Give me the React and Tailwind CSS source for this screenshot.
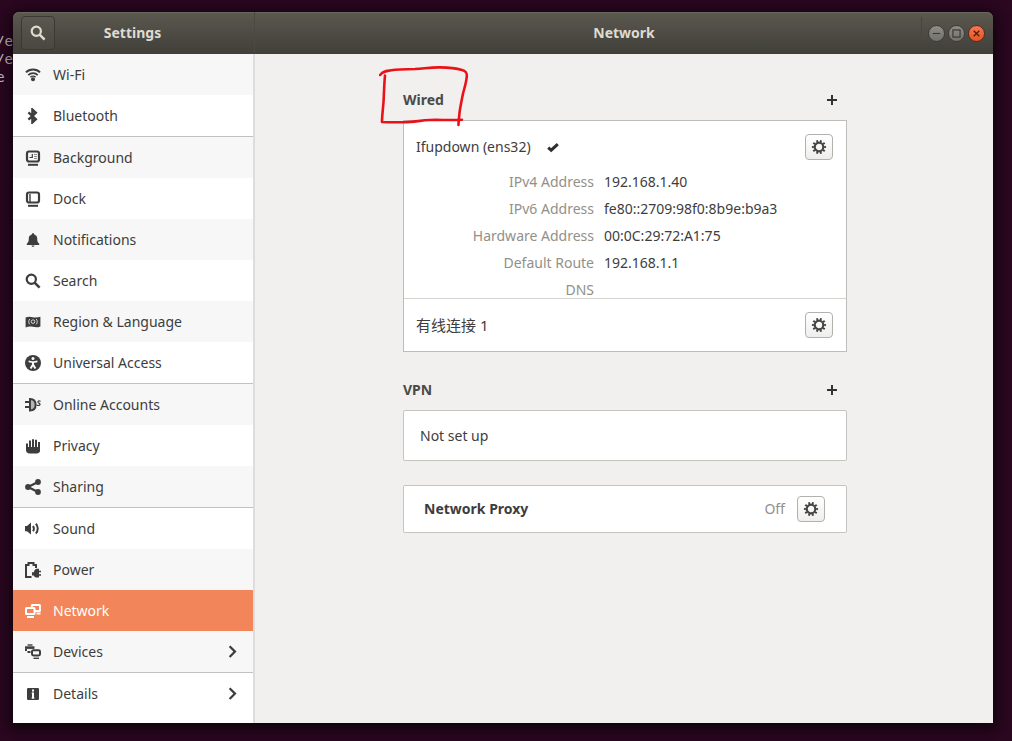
import clsx from "clsx"

const Icon = ({ children, size = 16, className }) => (
  <svg
    width={size}
    height={size}
    viewBox="0 0 16 16"
    fill="none"
    stroke="currentColor"
    strokeWidth="2"
    className={clsx("shrink-0", className)}
    aria-hidden="true"
  >
    {children}
  </svg>
)

const WifiIcon = () => (
  <Icon>
    <path d="M1 5.4C4.600 1.400 11.400 1.400 15 5.400" strokeWidth="2" />
    <path d="M3.3 8.1c2.4-2.6 7-2.6 9.4 0" strokeWidth="1.8" />
    <path d="M5.4 10.3c1.4-1.4 3.8-1.4 5.2 0" strokeWidth="1.4" />
    <circle cx="8" cy="12.3" r="2" fill="currentColor" stroke="none" />
  </Icon>
)

const BluetoothIcon = () => (
  <Icon>
    <path d="M3.4 4.4l7.4 6.8L7.400 14.400V1.600l3.400 3.200-7.400 6.800" strokeWidth="2.4" />
  </Icon>
)

const BackgroundIcon = () => (
  <Icon>
    <rect x="2" y="1.5" width="12" height="10" rx="2" strokeWidth="2.2" />
    <path d="M3 14.800h10" />
    <path d="M4.5 7.5h2.8V4" strokeWidth="1.2" />
    <path d="M9 4.5h3M9 6.500h3M9 8.500h3" strokeWidth="1" opacity="0.6" />
  </Icon>
)

const DockIcon = () => (
  <Icon>
    <rect x="2" y="1.5" width="12" height="10" rx="2" strokeWidth="2.2" />
    <path d="M5 3v8" strokeWidth="1.4" />
    <path d="M3 14.800h10" />
  </Icon>
)

const BellIcon = () => (
  <Icon>
    <path
      d="M8 1.2c.8 0 1.2.5 1.200 1.200 2.200.6 3 2.200 3 4.200 0 3 .6 4 2 5.200V13H1.800v-1.200c1.400-1.200 2-2.200 2-5.200 0-2 .8-3.600 3-4.200 0-.7.4-1.200 1.200-1.200zM6.600 13.400h2.800c0 1-.6 1.400-1.400 1.400s-1.400-.4-1.400-1.400z"
      fill="currentColor"
      stroke="none"
    />
  </Icon>
)

const SearchIcon = ({ className }) => (
  <Icon className={className}>
    <circle cx="6.3" cy="6.3" r="4.6" strokeWidth="2.2" />
    <path d="M9.6 9.6l5 5" strokeWidth="2.6" />
  </Icon>
)

const RegionIcon = () => (
  <Icon>
    <path
      d="M.6 3.6c2.4-1.2 4.600-1 7.200-.4 2.600.6 5 .4 7.600-.4v9.600c-2.600 1.200-5 1-7.600.4-2.600-.4-4.800-.4-7.200.6z"
      fill="currentColor"
      stroke="none"
    />
    <g stroke="#f7f7f7" strokeWidth="0.8">
      <circle cx="8" cy="7.6" r="1.8" />
      <path d="M4.800 5c-1.400 1.600-1.400 3.800 0 5.400M11.200 5c1.400 1.600 1.400 3.800 0 5.400" />
    </g>
  </Icon>
)

const AccessIcon = () => (
  <Icon>
    <circle cx="8" cy="8" r="8" fill="currentColor" stroke="none" />
    <circle cx="8" cy="3.6" r="1.5" fill="#fff" stroke="none" />
    <path d="M3.6 6.4L8 7.2l4.400-.8" stroke="#fff" strokeWidth="1.6" />
    <path d="M8 6.8v2.600L5.600 13.400M8 9.400l2.400 4" stroke="#fff" strokeWidth="1.9" />
  </Icon>
)

const PlugIcon = () => (
  <Icon>
    <path d="M0 5h4.500M0 10h4.500" strokeWidth="2" />
    <path d="M5 2v11.500c3.400 0 5.600-2.200 5.600-5.750S8.400 2 5 2z" fill="#b5b5b5" strokeWidth="2" />
    <path d="M15.600 4.200c-2-.6-3-.2-2.600 1 .4 1 2 1 2 2.200 0 1-1.400 1.600-3.400.6" strokeWidth="1.200" />
  </Icon>
)

const HandIcon = () => (
  <Icon>
    <path d="M2 5.600v6M5 2.600v8M8 1.200v9M11 1.800v9M14 4v7" />
    <path d="M1 9h14v3.600c0 1.800-1 2.800-2.800 2.800H4.600C2.400 15.400 1 14.400 1 12z" fill="currentColor" stroke="none" />
  </Icon>
)

const ShareIcon = () => (
  <Icon>
    <path d="M13 2.900L3 8l10 5.100" strokeWidth="2.2" />
    <g fill="currentColor" stroke="none">
      <circle cx="13" cy="3" r="2.9" />
      <circle cx="3" cy="8" r="2.9" />
      <circle cx="13" cy="13" r="2.9" />
    </g>
  </Icon>
)

const SoundIcon = () => (
  <Icon>
    <path d="M0 5h2L6 1.600v12L2 10.200H0z" fill="currentColor" stroke="none" />
    <path d="M8 5c1 1.500 1 3.700 0 5.200" />
    <path d="M10.800 2.800c2.600 2.400 2.600 7.200 0 9.600" />
  </Icon>
)

const PowerIcon = () => (
  <Icon>
    <path d="M6.500 15H1V3h2.500V1h5v2H11v3" />
    <path d="M16 9.500h-2M16 13h-2" strokeWidth="1.600" />
    <path d="M14 6.800v8.600h-2.200c-1.400 0-2.400-.6-3-2H7v-3.200h1.800c.6-2.200 1.600-3.400 3-3.400z" fill="currentColor" stroke="none" />
  </Icon>
)

const NetworkIcon = () => (
  <Icon>
    <rect x="6.800" y="2" width="8.200" height="6" rx="0.600" />
    <path d="M11.500 10.500h4" />
    <rect x="1" y="5" width="8.500" height="6" rx="0.600" fill="#f28559" />
    <path d="M2 14h7" />
  </Icon>
)

const DevicesIcon = () => (
  <Icon>
    <path d="M2.500 1h5" strokeWidth="1.400" />
    <path d="M0 3.600h9.500" strokeWidth="2.600" />
    <path d="M0 6h2M2.500 8h3" />
    <rect x="7" y="6.200" width="8" height="5.200" rx="1.400" />
    <path d="M8.500 14.300h5.500" strokeWidth="1.400" />
  </Icon>
)

const InfoIcon = () => (
  <Icon>
    <rect x="2" y="2" width="12" height="12" rx="1.200" fill="currentColor" stroke="none" />
    <path d="M8 3.400v2M8 6.600v5.800" stroke="#fff" />
    <path d="M6.600 7.200H8M6.400 12h3.200" stroke="#fff" strokeWidth="0.800" />
  </Icon>
)

const ChevronIcon = () => (
  <Icon className="ml-auto">
    <path d="M4.600 2.200L10 7.600l-5.400 5.400" strokeWidth="2.200" />
  </Icon>
)

const PlusIcon = () => (
  <Icon>
    <path d="M8 3v10M3 8h10" />
  </Icon>
)

const CheckIcon = () => (
  <Icon>
    <path d="M3.200 8.600l3 2.600 6.600-6" strokeWidth="3" />
  </Icon>
)

// Ring plus dashed outer circle for the teeth
const GearIcon = () => (
  <Icon>
    <circle cx="8" cy="8" r="4.300" strokeWidth="2.200" />
    <circle cx="8" cy="8" r="6" pathLength="20" strokeWidth="2.200" strokeDasharray="1 1" strokeDashoffset="0.500" />
  </Icon>
)

const ITEMS = [
  { label: "Wi-Fi", icon: WifiIcon },
  { label: "Bluetooth", icon: BluetoothIcon, divider: true },
  { label: "Background", icon: BackgroundIcon },
  { label: "Dock", icon: DockIcon },
  { label: "Notifications", icon: BellIcon },
  { label: "Search", icon: SearchIcon },
  { label: "Region & Language", icon: RegionIcon },
  { label: "Universal Access", icon: AccessIcon, divider: true },
  { label: "Online Accounts", icon: PlugIcon },
  { label: "Privacy", icon: HandIcon },
  { label: "Sharing", icon: ShareIcon, divider: true },
  { label: "Sound", icon: SoundIcon },
  { label: "Power", icon: PowerIcon },
  { label: "Network", icon: NetworkIcon, active: true },
  { label: "Devices", icon: DevicesIcon, more: true, divider: true },
  { label: "Details", icon: InfoIcon, more: true },
]

const DETAILS = [
  ["IPv4 Address", "192.168.1.40"],
  ["IPv6 Address", "fe80::2709:98f0:8b9e:b9a3"],
  ["Hardware Address", "00:0C:29:72:A1:75"],
  ["Default Route", "192.168.1.1"],
  ["DNS", ""],
]

const GearButton = ({ label }) => (
  <button
    type="button"
    aria-label={label}
    className="flex h-[26px] w-7 shrink-0 items-center justify-center rounded border border-[#b3b1ad] bg-linear-to-b from-white to-[#efeeed] text-[#454545]"
  >
    <GearIcon />
  </button>
)

const SectionHeading = ({ title, children }) => (
  <div className="relative flex h-10 items-center justify-between pr-[7px]">
    <h2 className="font-bold text-[#4a4a47]">{title}</h2>
    <button type="button" aria-label={`Add ${title} connection`} className="text-[#33332f]">
      <PlusIcon />
    </button>
    {children}
  </div>
)

const RedMarker = () => (
  <svg
    className="pointer-events-none absolute -left-6 -top-4 z-10"
    width="92"
    height="64"
    viewBox="0 0 92 64"
    fill="none"
    stroke="#ea1119"
    strokeWidth="2.6"
    strokeLinecap="round"
    strokeLinejoin="round"
    aria-hidden="true"
  >
    <path d="M1 11C4 7 9 6.300 16 5.700S28 5.300 36 5c10-.6 16-1.800 25-1.600S78 4.600 83 6c4 1.200 5 2.500 4.800 6-.3 7-3 13-4.300 20-1.200 6-2 10-2.900 16-.5 5-.9 9-1.200 13" />
    <path d="M6 11.500C5 22 5 31 4.500 38S3 52 3 58c8 .4 14 .2 22 .2 10 0 16-1.800 26-2.200s22 .6 32-.3" />
  </svg>
)

const Sidebar = () => (
  <nav className="w-[242px] shrink-0 border-r-2 border-[#dfdddb] bg-white">
    {ITEMS.map(({ label, icon: ItemIcon, divider, active, more }, i) => (
      <a
        key={label}
        href="#"
        aria-current={active ? "page" : undefined}
        className={clsx(
          "flex items-center gap-3 px-3",
          divider ? "h-[42px] border-b border-[#c3c1be]" : "h-[41px]",
          active ? "bg-[#f28559] text-white" : i % 2 === 0 ? "bg-[#f7f7f7]" : "bg-white"
        )}
      >
        <ItemIcon />
        <span>{label}</span>
        {more && <ChevronIcon />}
      </a>
    ))}
  </nav>
)

const TitleBar = () => (
  <header className="flex h-[42px] shrink-0 rounded-t-md bg-linear-to-b from-[#5b584f] to-[#403f39] font-bold text-[#dfdbd2] shadow-[inset_0_1px_0_#6a675d]">
    <div className="grid w-[242px] shrink-0 grid-cols-[42px_1fr_42px] items-center border-r border-[#4b4942] pr-0.5">
      <button
        type="button"
        aria-label="Search"
        className="ml-2 flex h-[34px] w-[34px] items-center justify-center rounded border border-[#3a3934] bg-linear-to-b from-[#5b584f] to-[#49473f]"
      >
        <SearchIcon />
      </button>
      <span className="text-center">Settings</span>
    </div>
    <div className="grid flex-1 grid-cols-[1fr_auto_1fr] items-center">
      <h1 className="col-start-2">Network</h1>
      <div className="mr-2 flex h-8 items-center gap-[3px] justify-self-end border-l border-[#47453e] pl-1.5">
        <button type="button" aria-label="Minimize" className="rounded-full border border-[#3b3a34] bg-linear-to-b from-[#8f8d87] to-[#73716b] text-[#3c3b37]">
          <Icon size={15}>
            <path d="M4 8h8" strokeWidth="1.200" />
          </Icon>
        </button>
        <button type="button" aria-label="Maximize" className="rounded-full border border-[#3b3a34] bg-linear-to-b from-[#8f8d87] to-[#73716b] text-[#3c3b37]">
          <Icon size={15}>
            <rect x="4.200" y="4.200" width="7.600" height="7.600" strokeWidth="1.300" />
          </Icon>
        </button>
        <button type="button" aria-label="Close" className="rounded-full border border-[#5a2c18] bg-linear-to-b from-[#f5764f] to-[#e9541f] text-[#4a1f10]">
          <Icon size={15}>
            <path d="M5 5l6 6M11 5l-6 6" strokeWidth="1.400" />
          </Icon>
        </button>
      </div>
    </div>
  </header>
)

const NetworkPanel = () => (
  <main className="flex-1 bg-[#f1f0ee] pl-[26px] pr-6 pt-[26px]">
    <div className="mx-auto max-w-[444px]">
      <section>
        <SectionHeading title="Wired">
          <RedMarker />
        </SectionHeading>
        <div className="border border-[#bfbdb9] bg-white">
          {/* Details are cut off at the row's lower edge */}
          <div className="h-[178px] overflow-hidden border-b border-[#d5d3d0] py-[13px] pl-3 pr-[13px]">
            <div className="flex items-center">
              <span>Ifupdown (ens32)</span>
              <span className="ml-[14px] text-[#2e2e2e]">
                <CheckIcon />
              </span>
              <span className="ml-auto">
                <GearButton label="Ifupdown (ens32) options" />
              </span>
            </div>
            <dl className="mt-2">
              {DETAILS.map(([name, value]) => (
                <div key={name} className="grid h-[27px] grid-cols-[178px_1fr] items-center gap-2.5">
                  <dt className="text-right text-[#929088]">{name}</dt>
                  <dd>{value}</dd>
                </div>
              ))}
            </dl>
          </div>
          <div className="flex items-center justify-between py-[13px] pl-3 pr-[13px]">
            <span className="text-[15px]">有线连接 1</span>
            <GearButton label="有线连接 1 options" />
          </div>
        </div>
      </section>

      <section className="mt-[18px]">
        <SectionHeading title="VPN" />
        <div className="flex h-[51px] items-center rounded-xs border border-[#c6c4c0] bg-white px-4">Not set up</div>
      </section>

      <section className="mt-6 flex h-12 items-center rounded-xs border border-[#c6c4c0] bg-white pl-5 pr-[21px]">
        <h2 className="font-bold">Network Proxy</h2>
        <span className="ml-auto mr-3 text-[#929088]">Off</span>
        <GearButton label="Network proxy options" />
      </section>
    </div>
  </main>
)

const App = () => (
  <div className="flex min-h-screen bg-[#2b0720] font-['Noto_Sans','Noto_Sans_CJK_SC',sans-serif] text-sm leading-5 text-[#3d3d3d]">
    {/* Terminal output peeking out behind the window */}
    <div className="flex w-[13px] shrink-0 flex-col items-end overflow-hidden whitespace-pre pt-8 font-['DejaVu_Sans_Mono',monospace] leading-[18px] text-[#c9bfc6]">
      <span>/e</span>
      <span>/e</span>
      <span>e </span>
    </div>
    <div className="mb-[18px] mr-[19px] mt-3 flex flex-1 flex-col rounded-t-md shadow-[0_3px_14px_4px_rgba(0,0,0,0.6)]">
      <TitleBar />
      <div className="flex flex-1">
        <Sidebar />
        <NetworkPanel />
      </div>
    </div>
  </div>
)

export default App
